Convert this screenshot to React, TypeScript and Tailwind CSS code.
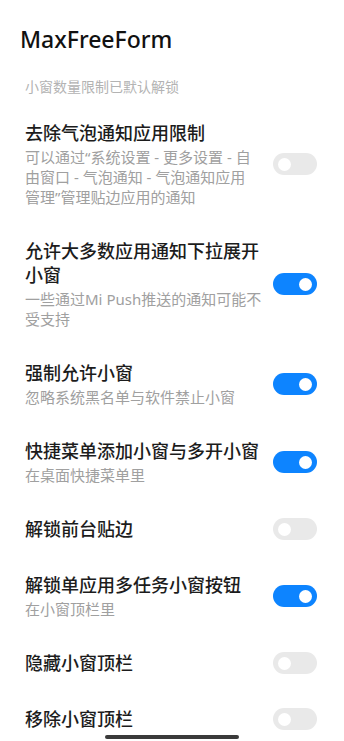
import React, {useState} from 'react';

type Setting = {
  id: string;
  title: string;
  summary?: string;
  summaryClass?: string;
  enabled: boolean;
};

const initialSettings: Setting[] = [
  {
    id: 'bubble',
    title: '去除气泡通知应用限制',
    summary: '可以通过“系统设置 - 更多设置 - 自由窗口 - 气泡通知 - 气泡通知应用管理”管理贴边应用的通知',
    summaryClass: 'max-w-[234px]',
    enabled: false,
  },
  {
    id: 'pulldown',
    title: '允许大多数应用通知下拉展开小窗',
    summary: '一些通过Mi Push推送的通知可能不受支持',
    enabled: true,
  },
  {id: 'force', title: '强制允许小窗', summary: '忽略系统黑名单与软件禁止小窗', enabled: true},
  {id: 'shortcut', title: '快捷菜单添加小窗与多开小窗', summary: '在桌面快捷菜单里', enabled: true},
  {id: 'edge', title: '解锁前台贴边', enabled: false},
  {id: 'multitask', title: '解锁单应用多任务小窗按钮', summary: '在小窗顶栏里', enabled: true},
  {id: 'hidebar', title: '隐藏小窗顶栏', enabled: false},
  {id: 'removebar', title: '移除小窗顶栏', enabled: false},
];

function Toggle({checked, onChange}: {checked: boolean; onChange: () => void}) {
  return (
    <button
      type="button"
      onClick={onChange}
      className={`shrink-0 w-[44px] h-[22px] rounded-full flex items-center px-[5px] ${
        checked ? 'bg-[#0d84ff] justify-end' : 'bg-[#e9e9e9] justify-start'
      }`}
    >
      <span className="block w-[13px] h-[13px] rounded-full bg-white" />
    </button>
  );
}

export default function App() {
  const [settings, setSettings] = useState<Setting[]>(initialSettings);

  function toggle(id: string) {
    setSettings(list => list.map(s => (s.id === id ? {...s, enabled: !s.enabled} : s)));
  }

  return (
    <div className="min-h-screen bg-white font-['Noto_Sans','Noto_Sans_CJK_SC',sans-serif]">
      <div className="pt-[23px]">
        <h1 className="pl-[20px] text-[23px] leading-[32px] font-medium text-[#111111]">MaxFreeForm</h1>
        <p className="mt-[22px] mb-[8px] pl-[25px] text-[14px] leading-[20px] text-[#b3b3b3]">小窗数量限制已默认解锁</p>

        <ul>
          {settings.map(s =>
            <li key={s.id} className="pl-[25px] pr-[27px] py-4 flex items-center gap-[8px]">
              <div className="flex-1 min-w-0">
                <h2 className="text-[18px] leading-[24px] font-medium text-[#1c1c1c]">{s.title}</h2>
                {s.summary &&
                  <p className={`mt-[2px] text-[15px] leading-[20px] text-[#a0a0a0] ${s.summaryClass ?? ''}`}>
                    {s.summary}
                  </p>
                }
              </div>
              <Toggle checked={s.enabled} onChange={() => toggle(s.id)} />
            </li>
          )}
        </ul>
      </div>

      <div className="fixed bottom-[2px] left-1/2 -translate-x-1/2 w-[134px] h-[4px] rounded-full bg-[#3a3a3a]" />
    </div>
  );
}
